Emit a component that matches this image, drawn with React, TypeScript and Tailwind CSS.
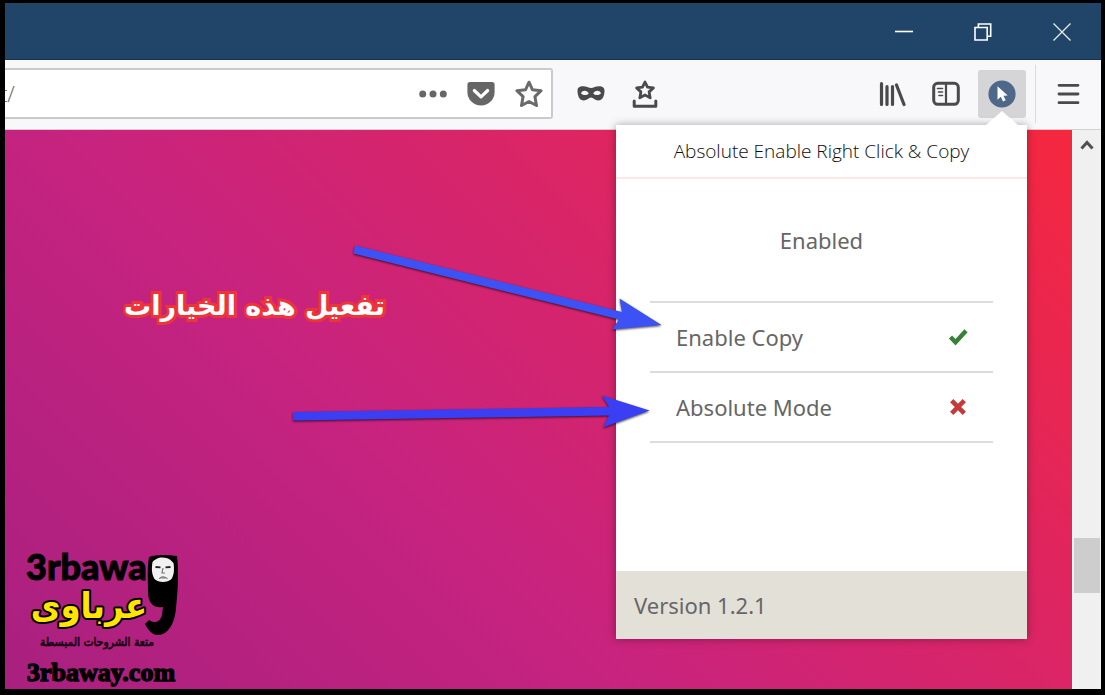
import type { ReactNode } from "react";

const Minimize = () => (
  <svg width="20" height="20" viewBox="0 0 20 20" aria-hidden="true">
    <path d="M1 10.500h18" stroke="#fff" strokeWidth="1.600" />
  </svg>
);
const Restore = () => (
  <svg width="20" height="20" viewBox="0 0 20 20" aria-hidden="true" fill="none" stroke="#fff" strokeWidth="1.600">
    <path d="M2 6.500h12.200V19H2z" />
    <path d="M5.400 6.500V3h12.300v12.300h-3.500" />
  </svg>
);
const Close = () => (
  <svg width="20" height="20" viewBox="0 0 20 20" aria-hidden="true">
    <path d="M1.500 2.500l17 17M18.500 2.500l-17 17" stroke="#e4eaf0" strokeWidth="1.300" />
  </svg>
);
const Dots = () => (
  <svg width="28" height="28" viewBox="0 0 28 28" fill="#666" aria-hidden="true">
    <circle cx="3.7" cy="14" r="3.5" />
    <circle cx="14" cy="14" r="3.5" />
    <circle cx="24.3" cy="14" r="3.5" />
  </svg>
);
const Pocket = () => (
  <svg width="28" height="28" viewBox="0 0 28 28" aria-hidden="true">
    <path d="M3 2h22a2.6 2.6 0 0 1 2.6 2.6V12a13.6 13.6 0 0 1-27.2 0V4.600A2.600 2.600 0 0 1 3 2z" fill="#666" />
    <path d="M7.300 10.500l6.700 6.300 6.700-6.300" fill="none" stroke="#fff" strokeWidth="3.200" strokeLinecap="round" strokeLinejoin="round" />
  </svg>
);
const Star = () => (
  <svg width="28" height="28" viewBox="0 0 28 28" aria-hidden="true">
    <path d="M14 2.200l3.500 7.600 8.600.900-6.200 5.900 1.600 8.900-7.500-4-7.500 4 1.600-8.900-6.200-5.900 8.600-.900z" fill="none" stroke="#6a6a6a" strokeWidth="3" strokeLinejoin="round" />
  </svg>
);
const Mask = () => (
  <svg width="28" height="28" viewBox="0 0 28 28" aria-hidden="true">
    <path fillRule="evenodd" fill="#4a4a4c" d="M.500 10.500C.500 7.500 3 6.300 6 6.300c3.500 0 5.500 1.700 8 1.700s4.500-1.700 8-1.700c3 0 5.500 1.200 5.500 4.200 0 6-2.200 10-6.300 10-3.200 0-5-3-7.200-3s-4 3-7.200 3c-4.100 0-6.300-4-6.300-10zM4 13.200c1.200 2.200 5.800 2.600 7.700.200C10.300 10.200 5.800 9.600 4 13.200zm20 0c-1.800-3.600-6.300-3-7.700.200 1.900 2.400 6.500 2 7.700-.200z" />
  </svg>
);
const StarTray = () => (
  <svg width="28" height="28" viewBox="0 0 28 28" fill="none" stroke="#4a4a4c" aria-hidden="true">
    <path d="M14 2l2.500 5.200 5.900.700-4.300 4 1.100 6-5.200-2.900-5.200 2.900 1.100-6-4.300-4 5.900-.700z" strokeWidth="2.800" strokeLinejoin="round" />
    <path d="M3.200 21v5.200h21.600V21" strokeWidth="3" strokeLinecap="round" strokeLinejoin="round" />
  </svg>
);
const Library = () => (
  <svg width="28" height="28" viewBox="0 0 28 28" stroke="#4a4a4c" strokeWidth="3.200" strokeLinecap="round" aria-hidden="true">
    <path d="M3.500 3.500v21M9 6.500v18M14.500 6.500v18M18.500 5l7.500 19.500" />
  </svg>
);
const Sidebar = () => (
  <svg width="28" height="28" viewBox="0 0 28 28" fill="none" stroke="#4a4a4c" aria-hidden="true">
    <rect x="1.700" y="3.300" width="24.600" height="21" rx="4" strokeWidth="3" />
    <path d="M14 4v20" strokeWidth="2.200" />
    <path d="M5.500 8.500h5M6.500 12h4M7 15.500h3.500" strokeWidth="1.600" strokeLinecap="round" />
  </svg>
);
const Pointer = () => (
  <svg width="28" height="28" viewBox="0 0 28 28" aria-hidden="true">
    <circle cx="14" cy="14" r="13.600" fill="#4d6889" />
    <path d="M9.500 6.300v13.400l3.300-2.900 2.200 4.700 2.700-1.200-2.200-4.600 4.200-.200z" fill="#fff" />
  </svg>
);
const Menu = () => (
  <svg width="28" height="28" viewBox="0 0 28 28" stroke="#4a4a4c" strokeWidth="2.800" strokeLinecap="round" aria-hidden="true">
    <path d="M5 5.300h19M5 14h19M5 22.700h19" />
  </svg>
);
const Check = () => (
  <svg width="20" height="20" viewBox="0 0 20 20" aria-hidden="true">
    <path d="M2.500 10l5 5.200L18 3.800" fill="none" stroke="#388038" strokeWidth="4.400" />
  </svg>
);
const Cross = () => (
  <svg width="20" height="20" viewBox="0 0 20 20" aria-hidden="true">
    <path d="M3.700 3.700l12.600 12.600M16.300 3.700L3.700 16.300" stroke="#c43a3a" strokeWidth="4.600" />
  </svg>
);

function IconButton({ label, children }: { label: string; children: ReactNode }) {
  return (
    <button type="button" aria-label={label} className="shrink-0">
      {children}
    </button>
  );
}

function Option({ label, children }: { label: string; children: ReactNode }) {
  return (
    <button
      type="button"
      className="flex w-full items-center justify-between border-b-2 border-[#dcdcdc] py-5 pr-[25px] pl-[26px] text-[22px] leading-7 text-[#666]"
    >
      <span>{label}</span>
      {children}
    </button>
  );
}

function Popup() {
  return (
    <section className="absolute top-[122px] right-[74px] flex h-[514px] w-[411px] flex-col bg-white font-['Noto_Sans','Open_Sans',sans-serif] shadow-[0_0_8px_rgba(0,0,0,0.35)]">
      <svg className="absolute -top-[14px] right-2 h-[15px] w-[34px]" viewBox="0 0 34 15" aria-hidden="true">
        <path d="M0 15L17 0l17 15z" fill="#fff" />
      </svg>
      <h1 className="border-b-2 border-[#fde6e8] py-3 text-center font-['Open_Sans',sans-serif] text-[19px] leading-7 font-light text-[#0c0c0d]">
        Absolute Enable Right Click &amp; Copy
      </h1>
      <div className="grow px-[34px]">
        <button type="button" className="w-full border-b-2 border-[#dcdcdc] pt-[47px] pb-[47px] text-center text-[22px] leading-7 text-[#666]">
          Enabled
        </button>
        <Option label="Enable Copy">
          <Check />
        </Option>
        <Option label="Absolute Mode">
          <Cross />
        </Option>
      </div>
      <footer className="bg-[#e3e0d8] px-[18px] py-5 text-[22px] leading-7 text-[#666]">Version 1.2.1</footer>
      <svg className="pointer-events-none absolute top-[109px] -left-[330px] h-[210px] w-[400px]" viewBox="286 234 400 210" aria-hidden="true">
        <g className="drop-shadow-[0_1px_1px_rgba(0,0,0,0.7)]">
          <path d="M355 245.500L622 312 619.500 298.500 661.500 325 612 329.500 619 319.500 353.500 253.500z" fill="#3d52f5" />
          <path d="M293 412L609 407 602 395.500 649.500 410.500 603 427.500 609 415.500 293 420.500z" fill="#3b3ff3" />
        </g>
      </svg>
    </section>
  );
}

function Logo() {
  return (
    <svg className="absolute bottom-0 left-4 h-[144px] w-[164px]" viewBox="21 545 164 144" role="img" aria-label="3rbaway">
      <text x="26" y="580" fontFamily="Lato, Liberation Sans, sans-serif" fontWeight="900" fontSize="36" stroke="#000" strokeWidth="1">
        3rbawa
      </text>
      <path d="M149 557c8-3 20-2 28-1 2 16 1 33-1 52-1 15-8 27-18 27-6 0-10-5-13-11l4-4c6 4 11 2 13-5l1-8c-10 2-15-5-15-15 0-12-1-23 1-35z" />
      <path d="M152.500 562c1-2 4-3 6-4 4-1 8-.500 12 2l3 3c1 7 .500 12-2 16-4 4-13 4-17 0-3-5-3-11-2-17z" fill="#f1f1f1" />
      <path d="M155.500 567l5 .300M165.500 567.300l5-.300" stroke="#222" strokeWidth="1.800" />
      <path d="M163 568l-1 5h3M159.500 579c1-3 6-3 8 0M161.500 578h4" stroke="#777" strokeWidth="1.200" fill="none" />
      <text x="89" y="618" direction="rtl" textAnchor="middle" fontFamily="DejaVu Sans Condensed, DejaVu Sans, sans-serif" fontWeight="700" fontSize="36" fill="#ffe500" stroke="#000" strokeWidth="4" strokeLinejoin="round" paintOrder="stroke">
        عرباوى
      </text>
      <text x="97" y="646" direction="rtl" textAnchor="middle" fontFamily="DejaVu Sans Condensed, DejaVu Sans, sans-serif" fontSize="12" fill="#16000f" stroke="#16000f" strokeWidth="0.600">
        متعة الشروحات المبسطة
      </text>
      <text x="27" y="681" fontFamily="Liberation Serif, serif" fontWeight="700" fontSize="26" stroke="#000" strokeWidth="1.400">
        3rbaway.com
      </text>
    </svg>
  );
}

export default function App() {
  return (
    <div className="flex min-h-screen flex-col bg-black pt-[3px] pr-1 pb-[6px] pl-[5px]">
      <div className="relative flex grow flex-col overflow-hidden">
        <header className="flex h-[57px] items-center justify-end gap-[59px] border-b border-[#17344f] bg-[#214568] pr-[29px]">
          <IconButton label="Minimize"><Minimize /></IconButton>
          <IconButton label="Restore"><Restore /></IconButton>
          <IconButton label="Close"><Close /></IconButton>
        </header>

        <nav className="flex h-[70px] items-center border-b border-[#d9cdd4] bg-[#f8f8fa] pb-[2px]">
          <div className="flex h-[51px] w-1/2 items-center gap-5 rounded-r-[3px] border-2 border-l-0 border-[#cacaca] bg-white pr-2">
            <input
              aria-label="Address"
              defaultValue="t/"
              className="min-w-0 grow indent-[-5px] font-['Open_Sans',sans-serif] text-[22px] font-light text-[#666] outline-none"
            />
            <IconButton label="Page actions"><Dots /></IconButton>
            <IconButton label="Save to Pocket"><Pocket /></IconButton>
            <IconButton label="Bookmark"><Star /></IconButton>
          </div>
          <div className="flex grow items-center justify-between pr-[19px] pl-6">
            <div className="flex items-center gap-[26px]">
              <IconButton label="Private"><Mask /></IconButton>
              <IconButton label="Bookmarks tray"><StarTray /></IconButton>
            </div>
            <div className="flex items-center">
              <div className="flex items-center gap-[26px]">
                <IconButton label="Library"><Library /></IconButton>
                <IconButton label="Sidebars"><Sidebar /></IconButton>
              </div>
              <button type="button" aria-label="Absolute Enable Right Click & Copy" className="ml-[18px] rounded-[3px] bg-[#d5d5d7] p-[10px]">
                <Pointer />
              </button>
              <div className="mr-[18px] ml-[9px] h-[58px] w-px bg-[#dadadc]" />
              <IconButton label="Menu"><Menu /></IconButton>
            </div>
          </div>
        </nav>

        <div className="flex grow">
          <main className="relative grow bg-[linear-gradient(45deg,#a8207f_0%,#c7237f_38%,#dc2563_68%,#f5273e_100%)]">
            <p
              dir="rtl"
              lang="ar"
              className="absolute top-[152px] left-[119px] font-['DejaVu_Sans',sans-serif] text-[27px] leading-[48px] font-bold whitespace-nowrap text-white [-webkit-text-stroke:6px_#ee3438] [paint-order:stroke_fill] [stroke-linejoin:round]"
            >
              تفعيل هذه الخيارات
            </p>
            <Logo />
          </main>
          <aside className="flex w-[29px] shrink-0 flex-col items-center justify-between border-l border-[#fafafa] bg-[#f0f0f0] pt-[9px] pb-24">
            <svg width="14" height="12" viewBox="0 0 14 12" aria-hidden="true">
              <path d="M1.500 9.500L7 3.500l5.500 6" fill="none" stroke="#505050" strokeWidth="3" />
            </svg>
            <div className="h-[55px] w-[26px] bg-[#cdcdcd]" />
          </aside>
        </div>

        <Popup />
      </div>
    </div>
  );
}
